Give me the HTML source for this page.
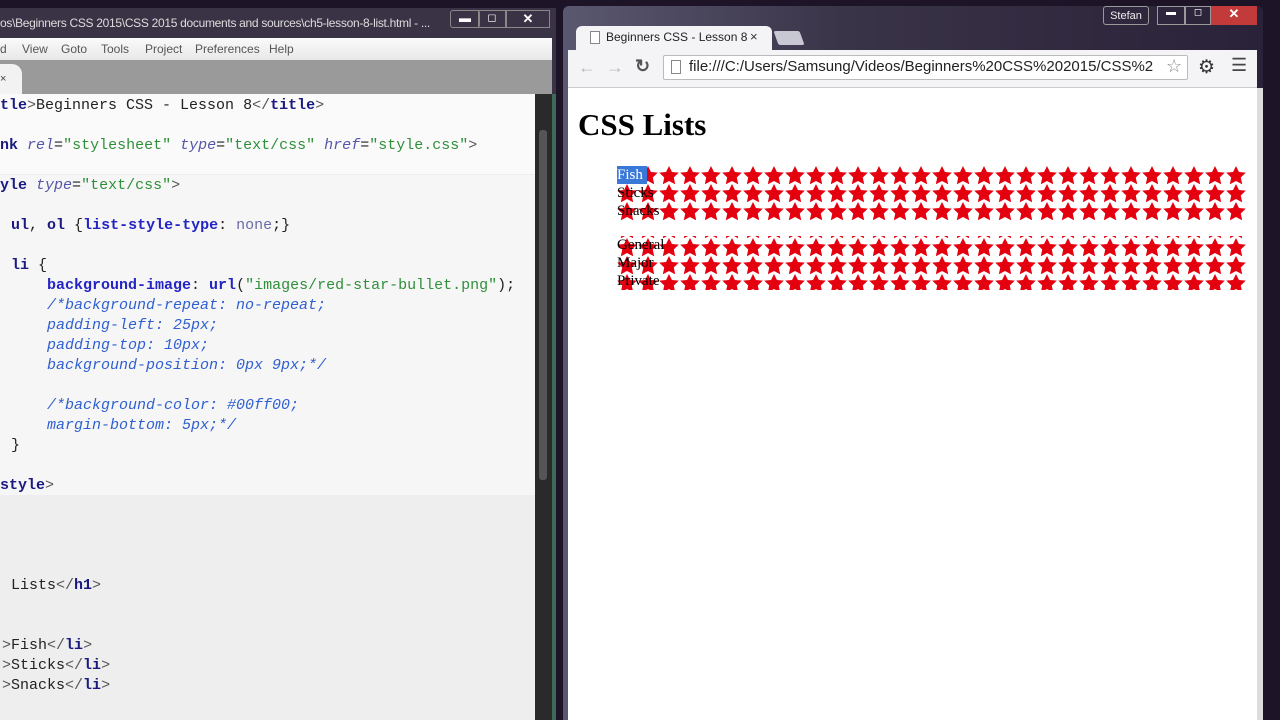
<!DOCTYPE html>
<html><head><meta charset="utf-8"><style>
*{margin:0;padding:0;box-sizing:border-box}
body{width:1280px;height:720px;overflow:hidden;background:#1e1428;position:relative;font-family:"Liberation Sans",sans-serif}
.abs{position:absolute}
.code{font-family:"Liberation Mono",monospace;font-size:15px;white-space:pre;color:#222;line-height:20px}
.t{color:#1a1a80;font-weight:bold}.a{color:#5656a8;font-style:italic}.s{color:#2f8f3a}.p{color:#2424c4;font-weight:bold}.c{color:#2f5fd0;font-style:italic}.v{color:#6a6aa8}.g{color:#555}
</style></head><body>
<div class="abs" style="left:0;top:8px;width:556px;height:712px;background:#3a3346"></div>
<div class="abs" style="left:0;top:12px;width:440px;height:22px;color:#ddd;font-size:12px;line-height:22px;white-space:nowrap;overflow:hidden;letter-spacing:-0.3px">os\Beginners CSS 2015\CSS 2015 documents and sources\ch5-lesson-8-list.html - ...</div>
<div class="abs" style="left:450px;top:10px;width:30px;height:18px;border:1px solid #888;border-radius:3px;color:#fff;font-size:12px;text-align:center">▬</div>
<div class="abs" style="left:478px;top:10px;width:28px;height:18px;border:1px solid #888;color:#fff;font-size:11px;text-align:center">◻</div>
<div class="abs" style="left:506px;top:10px;width:44px;height:18px;border:1px solid #888;color:#fff;font-size:13px;text-align:center;font-weight:bold">✕</div>
<div class="abs" style="left:0;top:38px;width:552px;height:22px;background:linear-gradient(#fafafa,#e8e8e8);font-size:12px;color:#555;line-height:22px">
<span style="position:absolute;left:0">d</span><span style="position:absolute;left:22px">View</span><span style="position:absolute;left:61px">Goto</span><span style="position:absolute;left:101px">Tools</span><span style="position:absolute;left:145px">Project</span><span style="position:absolute;left:195px">Preferences</span><span style="position:absolute;left:269px">Help</span></div>
<div class="abs" style="left:0;top:60px;width:552px;height:34px;background:#9a9a9a"></div>
<div class="abs" style="left:0;top:64px;width:22px;height:30px;background:#f2f2f2;border-radius:0 10px 0 0;font-size:11px;color:#444;line-height:30px">×</div>
<div class="abs" style="left:0;top:94px;width:535px;height:626px;background:#eeeeee"></div>
<div class="abs" style="left:0;top:94px;width:535px;height:80px;background:#fafafa"></div>
<div class="abs" style="left:0;top:175px;width:535px;height:320px;background:#f6f6f6"></div>
<div class="abs" style="left:535px;top:94px;width:17px;height:626px;background:#2a2a2a"></div>
<div class="abs" style="left:539px;top:130px;width:8px;height:350px;background:#555;border-radius:3px"></div>
<div class="abs" style="left:552px;top:94px;width:4px;height:626px;background:#3f6a5a"></div>
<div class="abs code" style="left:0;top:96px"><span class="t">tle</span><span class="g">&gt;</span>Beginners CSS - Lesson 8<span class="g">&lt;/</span><span class="t">title</span><span class="g">&gt;</span></div>
<div class="abs code" style="left:0;top:136px"><span class="t">nk</span> <span class="a">rel</span>=<span class="s">"stylesheet"</span> <span class="a">type</span>=<span class="s">"text/css"</span> <span class="a">href</span>=<span class="s">"style.css"</span><span class="g">&gt;</span></div>
<div class="abs code" style="left:0;top:176px"><span class="t">yle</span> <span class="a">type</span>=<span class="s">"text/css"</span><span class="g">&gt;</span></div>
<div class="abs code" style="left:11px;top:216px"><span class="t">ul</span>, <span class="t">ol</span> {<span class="p">list-style-type</span>: <span class="v">none</span>;}</div>
<div class="abs code" style="left:11px;top:256px"><span class="t">li</span> {</div>
<div class="abs code" style="left:47px;top:276px"><span class="p">background-image</span>: <span class="p">url</span>(<span class="s">"images/red-star-bullet.png"</span>);</div>
<div class="abs code c" style="left:47px;top:296px">/*background-repeat: no-repeat;
padding-left: 25px;
padding-top: 10px;
background-position: 0px 9px;*/

/*background-color: #00ff00;
margin-bottom: 5px;*/</div>
<div class="abs code" style="left:11px;top:436px">}</div>
<div class="abs code" style="left:0;top:476px"><span class="t">style</span><span class="g">&gt;</span></div>
<div class="abs code" style="left:2px;top:576px"> Lists<span class="g">&lt;/</span><span class="t">h1</span><span class="g">&gt;</span></div>
<div class="abs code" style="left:2px;top:636px"><span class="g">&gt;</span>Fish<span class="g">&lt;/</span><span class="t">li</span><span class="g">&gt;</span>
<span class="g">&gt;</span>Sticks<span class="g">&lt;/</span><span class="t">li</span><span class="g">&gt;</span>
<span class="g">&gt;</span>Snacks<span class="g">&lt;/</span><span class="t">li</span><span class="g">&gt;</span></div>
<div class="abs" style="left:563px;top:6px;width:700px;height:714px;background:linear-gradient(90deg,#5a5870,#3a3448 40%,#2a2238);border-radius:6px 6px 0 0"></div>
<div class="abs" style="left:1103px;top:6px;width:46px;height:19px;border:1px solid #999;border-radius:3px;color:#eee;font-size:11px;text-align:center;line-height:18px">Stefan</div>
<div class="abs" style="left:1157px;top:6px;width:28px;height:19px;border:1px solid #999;color:#fff;font-size:10px;text-align:center">▬</div>
<div class="abs" style="left:1185px;top:6px;width:26px;height:19px;border:1px solid #999;color:#fff;font-size:10px;text-align:center">◻</div>
<div class="abs" style="left:1211px;top:6px;width:46px;height:19px;background:#c23a3a;color:#fff;font-size:13px;text-align:center;font-weight:bold">✕</div>
<div class="abs" style="left:576px;top:26px;width:196px;height:26px;background:#f4f4f6;border-radius:6px 6px 0 0"></div>
<div class="abs" style="left:590px;top:31px;width:10px;height:13px;border:1px solid #888;background:#fff"></div>
<div class="abs" style="left:606px;top:30px;font-size:12px;color:#222">Beginners CSS - Lesson 8</div>
<div class="abs" style="left:750px;top:29px;font-size:13px;color:#333">×</div>
<div class="abs" style="left:776px;top:31px;width:26px;height:14px;background:#c8c8d2;transform:skewX(20deg);border-radius:2px"></div>
<div class="abs" style="left:568px;top:50px;width:689px;height:38px;background:#f4f4f6;border-bottom:1px solid #ccc"></div>
<div class="abs" style="left:578px;top:57px;font-size:18px;color:#bbb">←</div>
<div class="abs" style="left:606px;top:57px;font-size:18px;color:#bbb">→</div>
<div class="abs" style="left:635px;top:56px;font-size:18px;color:#555;font-weight:bold">↻</div>
<div class="abs" style="left:663px;top:55px;width:525px;height:25px;background:#fff;border:1px solid #bbb;border-radius:2px"></div>
<div class="abs" style="left:671px;top:60px;width:10px;height:14px;border:1px solid #888"></div>
<div class="abs" style="left:689px;top:58px;width:472px;font-size:15px;color:#222;white-space:nowrap;overflow:hidden">file:///C:/Users/Samsung/Videos/Beginners%20CSS%202015/CSS%2</div>
<div class="abs" style="left:1166px;top:56px;font-size:18px;color:#888">☆</div>
<div class="abs" style="left:1198px;top:56px;font-size:19px;color:#333">⚙</div>
<div class="abs" style="left:1231px;top:55px;font-size:18px;color:#444">☰</div>
<div class="abs" style="left:568px;top:88px;width:689px;height:632px;background:#fff"></div>
<div class="abs" style="left:578px;top:107px;font-family:'Liberation Serif',serif;font-weight:bold;font-size:31px;color:#000">CSS Lists</div>
<svg class="abs" style="left:617px;top:166px" width="630" height="126">
<defs><pattern id="st" width="21" height="18" patternUnits="userSpaceOnUse"><path d="M10 0L12.94 5.95L19.8 6.6L14.76 11.55L16.2 18.3L10 15L3.8 18.3L5.24 11.55L0.2 6.6L7.06 5.95Z" fill="#e4000e"/></pattern></defs>
<rect x="0" y="0" width="630" height="54" fill="url(#st)"/>
<rect x="0" y="70" width="630" height="54" fill="url(#st)"/>
</svg>
<div class="abs" style="left:617px;top:166px;width:30px;height:18px;background:#3a78d8"></div>
<div class="abs" style="left:617px;top:166px;font-family:'Liberation Serif',serif;font-size:15px;line-height:18px;color:#000"><span style="color:#fff">Fish</span><br>Sticks<br>Snacks</div>
<div class="abs" style="left:617px;top:236px;font-family:'Liberation Serif',serif;font-size:15px;line-height:18px;color:#000">General<br>Major<br>Private</div>
<div class="abs" style="left:1257px;top:88px;width:6px;height:632px;background:#ddd"></div>
</body></html>
